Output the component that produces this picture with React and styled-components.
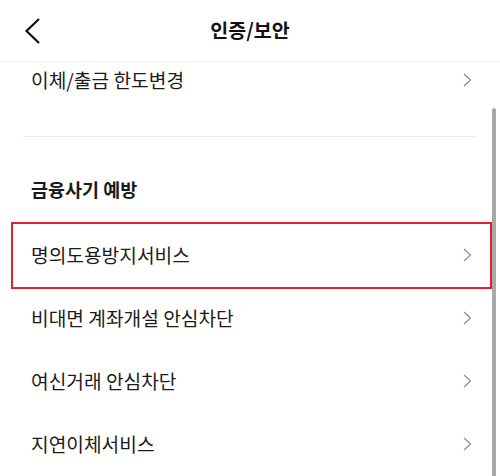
import React from 'react';
import styled, { createGlobalStyle } from 'styled-components';

const GlobalStyle = createGlobalStyle`
  html, body {
    margin: 0;
    padding: 0;
    background: #fff;
  }
  body {
    font-family: "Noto Sans CJK KR", "Noto Sans", sans-serif;
    color: #1b1b1b;
  }
`;

const Screen = styled.div`
  position: relative;
  width: 500px;
  height: 476px;
  overflow: hidden;
  background: #fff;
  display: flex;
  flex-direction: column;
`;

const Header = styled.header`
  flex: none;
  height: 61px;
  display: grid;
  grid-template-columns: 60px 1fr 60px;
  align-items: center;
  border-bottom: 1px solid #ededed;
  background: #fff;
  position: relative;
  z-index: 1;
`;

const BackButton = styled.button`
  border: none;
  background: none;
  padding: 0 0 0 24px;
  height: 100%;
  display: flex;
  align-items: center;
  cursor: pointer;
`;

const Title = styled.h1`
  margin: 0;
  text-align: center;
  font-size: 19.5px;
  font-weight: 700;
  color: #111;
  line-height: 1;
  padding-bottom: 2px;
`;

const Body = styled.div`
  flex: 1;
  overflow: hidden;
`;

const List = styled.div`
  margin-top: ${(p) => p.$offset || 0}px;
`;

const Row = styled.div`
  position: relative;
  height: 63px;
  display: flex;
  align-items: center;
  justify-content: space-between;
  padding: 0 28px 0 31px;
  font-size: 19.2px;
  color: #1b1b1b;
  cursor: pointer;

  ${(p) =>
    p.$marked &&
    `
    &::after {
      content: '';
      position: absolute;
      left: 11px;
      right: 8px;
      top: -1px;
      bottom: -3px;
      border: 2.5px solid #e3202b;
      pointer-events: none;
    }
  `}
`;

const Divider = styled.hr`
  margin: 25px 24px 0 23px;
  border: none;
  border-top: 1px solid #ececec;
`;

const SectionTitle = styled.h2`
  margin: 0;
  padding: 40px 31px 22px;
  font-size: 18.5px;
  font-weight: 700;
  line-height: 24px;
  color: #1b1b1b;
`;

const ScrollThumb = styled.div`
  position: absolute;
  right: 4px;
  top: 108px;
  bottom: 0;
  width: 4px;
  border-radius: 2px 2px 0 0;
  background: #a9a9a9;
`;

const BackIcon = () => (
  <svg width="17" height="28" viewBox="0 0 17 28">
    <path d="M15 2 L2.5 14 L15 26" fill="none" stroke="#111" strokeWidth="2.2" />
  </svg>
);

const Chevron = () => (
  <svg width="9" height="14" viewBox="0 0 9 14">
    <path d="M1 1 L7.5 7 L1 13" fill="none" stroke="#8a8a8a" strokeWidth="1.2" />
  </svg>
);

const MenuRow = ({ label, marked }) => (
  <Row $marked={marked}>
    <span>{label}</span>
    <Chevron />
  </Row>
);

const fraudItems = [
  { label: '명의도용방지서비스', marked: true },
  { label: '비대면 계좌개설 안심차단' },
  { label: '여신거래 안심차단' },
  { label: '지연이체서비스' },
];

const App = () => {
  return (
    <>
      <GlobalStyle />
      <Screen>
        <Header>
          <BackButton aria-label="뒤로">
            <BackIcon />
          </BackButton>
          <Title>인증/보안</Title>
          <span />
        </Header>
        <Body>
          <List $offset={-14}>
            <MenuRow label="이체/출금 한도변경" />
            <Divider />
            <SectionTitle>금융사기 예방</SectionTitle>
            {fraudItems.map((item) => (
              <MenuRow key={item.label} label={item.label} marked={item.marked} />
            ))}
          </List>
        </Body>
        <ScrollThumb />
      </Screen>
    </>
  );
};

export default App;
